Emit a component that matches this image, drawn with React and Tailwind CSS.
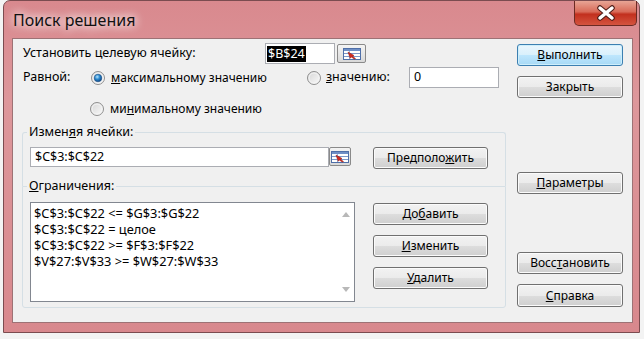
import React from "react";

const font = "font-['Noto_Sans',sans-serif]";

function Btn({ children, className = "", primary = false }) {
  return (
    <div
      className={
        primary
          ? `flex items-center justify-center rounded-[3px] border border-[#3c7fb1] bg-[linear-gradient(180deg,#eaf6fd_0%,#d9f0fc_50%,#bee6fd_51%,#a7d9f5_100%)] shadow-[inset_0_0_0_1px_#cdeefb] text-[12px] text-black ${className}`
          : `flex items-center justify-center rounded-[3px] border border-[#707070] bg-[linear-gradient(180deg,#f2f2f2_0%,#ebebeb_50%,#dddddd_51%,#cfcfcf_100%)] shadow-[inset_0_0_0_1px_#fbfbfb] text-[12px] text-black ${className}`
      }
    >
      <span className="leading-none">{children}</span>
    </div>
  );
}

function Radio({ checked = false }) {
  return (
    <svg width="14" height="14" viewBox="0 0 14 14" className="shrink-0">
      <defs>
        <linearGradient id="rbg" x1="0" y1="0" x2="1" y2="1">
          <stop offset="0" stopColor="#d4d4d4" />
          <stop offset="1" stopColor="#fbfbfb" />
        </linearGradient>
        <radialGradient id="rdot" cx="0.4" cy="0.35" r="0.7">
          <stop offset="0" stopColor="#b6e4fb" />
          <stop offset="0.45" stopColor="#2b8ad0" />
          <stop offset="1" stopColor="#0b3f7a" />
        </radialGradient>
      </defs>
      <circle cx="7" cy="7" r="6.5" fill="url(#rbg)" stroke="#8f8f8f" />
      <circle cx="7" cy="7" r="5" fill="none" stroke="#f4f4f4" />
      {checked && <circle cx="7" cy="7" r="3.8" fill="url(#rdot)" stroke="#1c4f86" strokeWidth="0.6" />}
    </svg>
  );
}

function RangeBtn({ className = "" }) {
  return (
    <div
      className={`flex items-center justify-center rounded-[2px] border border-[#8a8a8a] bg-[linear-gradient(180deg,#f4f4f4,#d8d8d8)] ${className}`}
    >
      <svg width="18" height="12" viewBox="0 0 18 12">
        <rect x="0.5" y="0.5" width="17" height="11" fill="#ffffff" stroke="#4f6fa8" />
        <rect x="1" y="1" width="16" height="2" fill="#6f8fc6" />
        <line x1="1" y1="5.5" x2="17" y2="5.5" stroke="#7d98c9" />
        <line x1="1" y1="8.5" x2="17" y2="8.5" stroke="#7d98c9" />
        <line x1="6.5" y1="3" x2="6.5" y2="11" stroke="#9fb3d9" />
        <path d="M5 4 L11 7.5 L9.5 8.3 L12.5 10.5 L11.2 11 L8.3 9 L7.2 10.3 Z" fill="#d32a1f" stroke="#8a1510" strokeWidth="0.5" />
      </svg>
    </div>
  );
}

export default function App() {
  return (
    <div className={`w-[644px] h-[339px] overflow-hidden bg-[#f3f3f3] ${font}`}>
      <div className="ml-[3px] w-[637px] h-[333px] rounded-t-[7px] border border-[#7b4c50] bg-[linear-gradient(180deg,#d9898e_0%,#dd979b_30%,#d8888d_100%)] flex flex-col">
        {/* title bar */}
        <div className="h-[37px] flex items-start justify-between">
          <div className="pl-[9px] pt-[8px] text-[16px] leading-[22px] text-[#111] [text-shadow:0_0_8px_#ffffff,0_0_12px_#ffffff]">
            Поиск решения
          </div>
          <div className="mr-[2px] w-[63px] h-[25px] rounded-b-[5px] border border-t-0 border-[#6b2a23] bg-[linear-gradient(180deg,#e8a595_0%,#d86a58_45%,#c2301e_55%,#d4543f_100%)] flex items-center justify-center">
            <svg width="24" height="16" viewBox="0 0 24 16">
              <path d="M6 3 L18 13 M18 3 L6 13" stroke="#4a1a15" strokeWidth="5.5" strokeLinecap="round" />
              <path d="M6 3 L18 13 M18 3 L6 13" stroke="#ffffff" strokeWidth="3.5" strokeLinecap="round" />
            </svg>
          </div>
        </div>

        {/* client area */}
        <div className="ml-[8px] w-[621px] h-[285px] border border-[#9d7275] bg-[#f0f0f0] flex text-[12.5px] text-black">
          {/* left column */}
          <div className="w-[503px] flex flex-col">
            <div className="mt-[4px] h-[21px] flex items-center pl-[10px]">
              <div className="w-[242px]">Установить целевую ячейку:</div>
              <div className="w-[70px] h-[21px] border border-[#abadb3] bg-white flex items-center pl-[1px]">
                <span className="bg-black text-white leading-[16px] px-[1px]">$B$24</span>
              </div>
              <RangeBtn className="ml-[2px] w-[29px] h-[19px]" />
            </div>

            <div className="mt-[3px] h-[21px] flex items-center pl-[10px]">
              <div className="w-[68px]">Равной:</div>
              <div className="w-[216px] flex items-center gap-[6px]">
                <Radio checked />
                <span className="text-[12px]">
                  <u>м</u>аксимальному значению
                </span>
              </div>
              <div className="w-[102px] flex items-center gap-[5px]">
                <Radio />
                <span>
                  <u>з</u>начению:
                </span>
              </div>
              <div className="w-[90px] h-[21px] border border-[#abadb3] bg-white flex items-center pl-[4px]">0</div>
            </div>

            <div className="mt-[11px] h-[20px] flex items-center pl-[77px] gap-[6px]">
              <Radio />
              <span className="text-[12px]">
                ми<u>н</u>имальному значению
              </span>
            </div>

            {/* group 1 */}
            <div className="relative mt-[13px] ml-[9px] w-[484px] h-[54px] border border-b-0 border-[#d5dfe5] rounded-t-[3px]">
              <div className="absolute -top-[10px] left-[4px] px-[2px] bg-[#f0f0f0] leading-[18px]">
                Измен<u>я</u>я ячейки:
              </div>
              <div className="pt-[14px] pl-[7px] flex items-start">
                <div className="w-[299px] h-[20px] border border-[#abadb3] bg-white flex items-center pl-[4px]">$C$3:$C$22</div>
                <RangeBtn className="w-[22px] h-[19px]" />
                <Btn className="ml-[22px] w-[115px] h-[22px]">
                  Предполо<u>ж</u>ить
                </Btn>
              </div>
            </div>

            {/* group 2 */}
            <div className="relative ml-[9px] w-[484px] h-[122px] border border-[#d5dfe5] rounded-b-[3px]">
              <div className="absolute -top-[10px] left-[4px] px-[2px] bg-[#f0f0f0] leading-[18px]">
                <u>О</u>граничения:
              </div>
              <div className="pt-[15px] pl-[7px] flex items-start">
                <div className="w-[325px] h-[100px] border border-[#828790] bg-white flex">
                  <div className="flex-1 pl-[3px] pt-[2px] text-[12.8px] leading-[16px]">
                    <div>$C$3:$C$22 &lt;= $G$3:$G$22</div>
                    <div>$C$3:$C$22 = целое</div>
                    <div>$C$3:$C$22 &gt;= $F$3:$F$22</div>
                    <div>$V$27:$V$33 &gt;= $W$27:$W$33</div>
                  </div>
                  <div className="w-[17px] flex flex-col items-center justify-between py-[9px]">
                    <svg width="8" height="5" viewBox="0 0 8 5">
                      <path d="M0 5 L4 0 L8 5 Z" fill="#b8b8b8" />
                    </svg>
                    <svg width="8" height="5" viewBox="0 0 8 5">
                      <path d="M0 0 L4 5 L8 0 Z" fill="#b8b8b8" />
                    </svg>
                  </div>
                </div>
                <div className="ml-[18px] mt-[1px] flex flex-col gap-[10px]">
                  <Btn className="w-[115px] h-[22px]">
                    До<u>б</u>авить
                  </Btn>
                  <Btn className="w-[115px] h-[22px]">
                    <u>И</u>зменить
                  </Btn>
                  <Btn className="w-[115px] h-[22px]">
                    <u>У</u>далить
                  </Btn>
                </div>
              </div>
            </div>
          </div>

          {/* right column */}
          <div className="ml-[1px] flex flex-col">
            <Btn primary className="mt-[5px] w-[106px] h-[22px]">
              <u>В</u>ыполнить
            </Btn>
            <Btn className="mt-[10px] w-[106px] h-[22px]">Закрыть</Btn>
            <Btn className="mt-[74px] w-[106px] h-[22px]">
              <u>П</u>араметры
            </Btn>
            <Btn className="mt-[58px] w-[106px] h-[22px]">
              Восс<u>т</u>ановить
            </Btn>
            <Btn className="mt-[10px] w-[106px] h-[23px]">
              <u>С</u>правка
            </Btn>
          </div>
        </div>
      </div>
    </div>
  );
}
